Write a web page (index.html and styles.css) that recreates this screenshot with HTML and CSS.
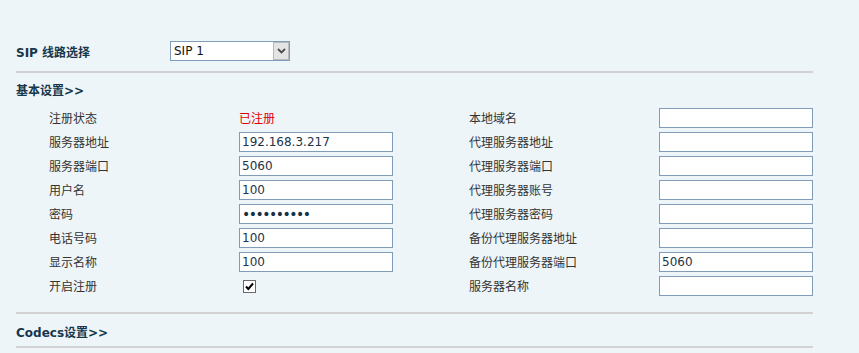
FILE: index.html
```html
<!DOCTYPE html>
<html lang="zh-CN">
<head>
<meta charset="utf-8">
<title>SIP</title>
<link rel="stylesheet" href="styles.css">
</head>
<body>
<div class="page">
  <div class="line-select">
    <span class="line-label">SIP 线路选择</span>
    <div class="select-wrap">
      <select class="select"><option>SIP 1</option></select>
      <span class="select-btn">
        <svg width="9" height="6" viewBox="0 0 9 6"><path d="M1 1 L4.5 4.5 L8 1" fill="none" stroke="#4d4d4d" stroke-width="1.8"/></svg>
      </span>
    </div>
  </div>
  <div class="divider"></div>
  <div class="section-title">基本设置&gt;&gt;</div>
  <div class="grid">
    <span class="label">注册状态</span>
    <span class="status">已注册</span>
    <span class="label">本地域名</span>
    <input class="field" type="text" value="">

    <span class="label">服务器地址</span>
    <input class="field" type="text" value="192.168.3.217">
    <span class="label">代理服务器地址</span>
    <input class="field" type="text" value="">

    <span class="label">服务器端口</span>
    <input class="field" type="text" value="5060">
    <span class="label">代理服务器端口</span>
    <input class="field" type="text" value="">

    <span class="label">用户名</span>
    <input class="field" type="text" value="100">
    <span class="label">代理服务器账号</span>
    <input class="field" type="text" value="">

    <span class="label">密码</span>
    <input class="field pw" type="password" value="1234567890">
    <span class="label">代理服务器密码</span>
    <input class="field" type="text" value="">

    <span class="label">电话号码</span>
    <input class="field" type="text" value="100">
    <span class="label">备份代理服务器地址</span>
    <input class="field" type="text" value="">

    <span class="label">显示名称</span>
    <input class="field" type="text" value="100">
    <span class="label">备份代理服务器端口</span>
    <input class="field" type="text" value="5060">

    <span class="label">开启注册</span>
    <span class="check-cell"><span class="checkbox"><svg width="11" height="11" viewBox="0 0 11 11"><path d="M2 5.5 L4.3 8 L9 2.5" fill="none" stroke="#000" stroke-width="2"/></svg></span></span>
    <span class="label">服务器名称</span>
    <input class="field" type="text" value="">
  </div>
  <div class="divider div-b"></div>
  <div class="section-title codecs">Codecs设置&gt;&gt;</div>
  <div class="divider div-c"></div>
</div>
</body>
</html>
```
FILE: styles.css
```css
html, body {
  margin: 0;
  padding: 0;
  background: #edf5f8;
}
body {
  font-family: "DejaVu Sans", "Noto Sans CJK SC", sans-serif;
  font-size: 12px;
  color: #333;
}
.page {
  width: 797px;
  padding: 41px 0 0 16px;
}
.line-select {
  display: flex;
  align-items: center;
  height: 20px;
}
.line-label {
  width: 154px;
  font-weight: bold;
  color: #17364b;
  font-size: 12px;
}
.select-wrap {
  position: relative;
  width: 120px;
  height: 20px;
}
.select {
  appearance: none;
  -webkit-appearance: none;
  width: 120px;
  height: 20px;
  box-sizing: border-box;
  border: 1px solid #7f9db9;
  border-radius: 0;
  background: #fff;
  font-family: "DejaVu Sans", sans-serif;
  font-size: 12px;
  color: #111;
  padding: 0 0 0 3px;
  margin: 0;
}
.select-btn {
  position: absolute;
  right: 1px;
  top: 1px;
  width: 16px;
  height: 18px;
  box-sizing: border-box;
  background: #e4e4e4;
  border: 1px solid #b9b9b9;
  display: flex;
  align-items: center;
  justify-content: center;
}
.divider {
  height: 2px;
  background: #d2d2d2;
  margin-top: 10px;
}
.section-title {
  height: 35px;
  display: flex;
  align-items: center;
  padding-bottom: 3px;
  box-sizing: border-box;
  font-weight: bold;
  color: #17364b;
}
.codecs {
  height: 32px;
  padding-bottom: 0;
  padding-top: 3px;
}
.grid {
  display: grid;
  grid-template-columns: 190px 230px 190px 154px;
  grid-auto-rows: 20px;
  row-gap: 4px;
  align-items: center;
  padding-left: 33px;
}
.label {
  font-family: "Noto Sans CJK SC", sans-serif;
  font-size: 12px;
  color: #333;
  line-height: 20px;
}
.status {
  font-family: "Noto Sans CJK SC", sans-serif;
  color: #e00000;
  line-height: 20px;
}
.field {
  width: 154px;
  height: 20px;
  box-sizing: border-box;
  border: 1px solid #7f9db9;
  border-radius: 0;
  background: #fff;
  margin: 0;
  padding: 0 2px;
  font-family: "DejaVu Sans", sans-serif;
  font-size: 12px;
  color: #1c3448;
  outline: none;
}
.pw {
  font-size: 14px;
  letter-spacing: -1.5px;
  color: #16324a;
}
.check-cell {
  display: flex;
  align-items: center;
  padding-left: 4px;
}
.checkbox {
  width: 13px;
  height: 13px;
  box-sizing: border-box;
  border: 1px solid #6a6a6a;
  background: #fff;
  display: flex;
  align-items: center;
  justify-content: center;
}
.div-b {
  margin-top: 16px;
}
.div-c {
  margin-top: 0;
}
```
